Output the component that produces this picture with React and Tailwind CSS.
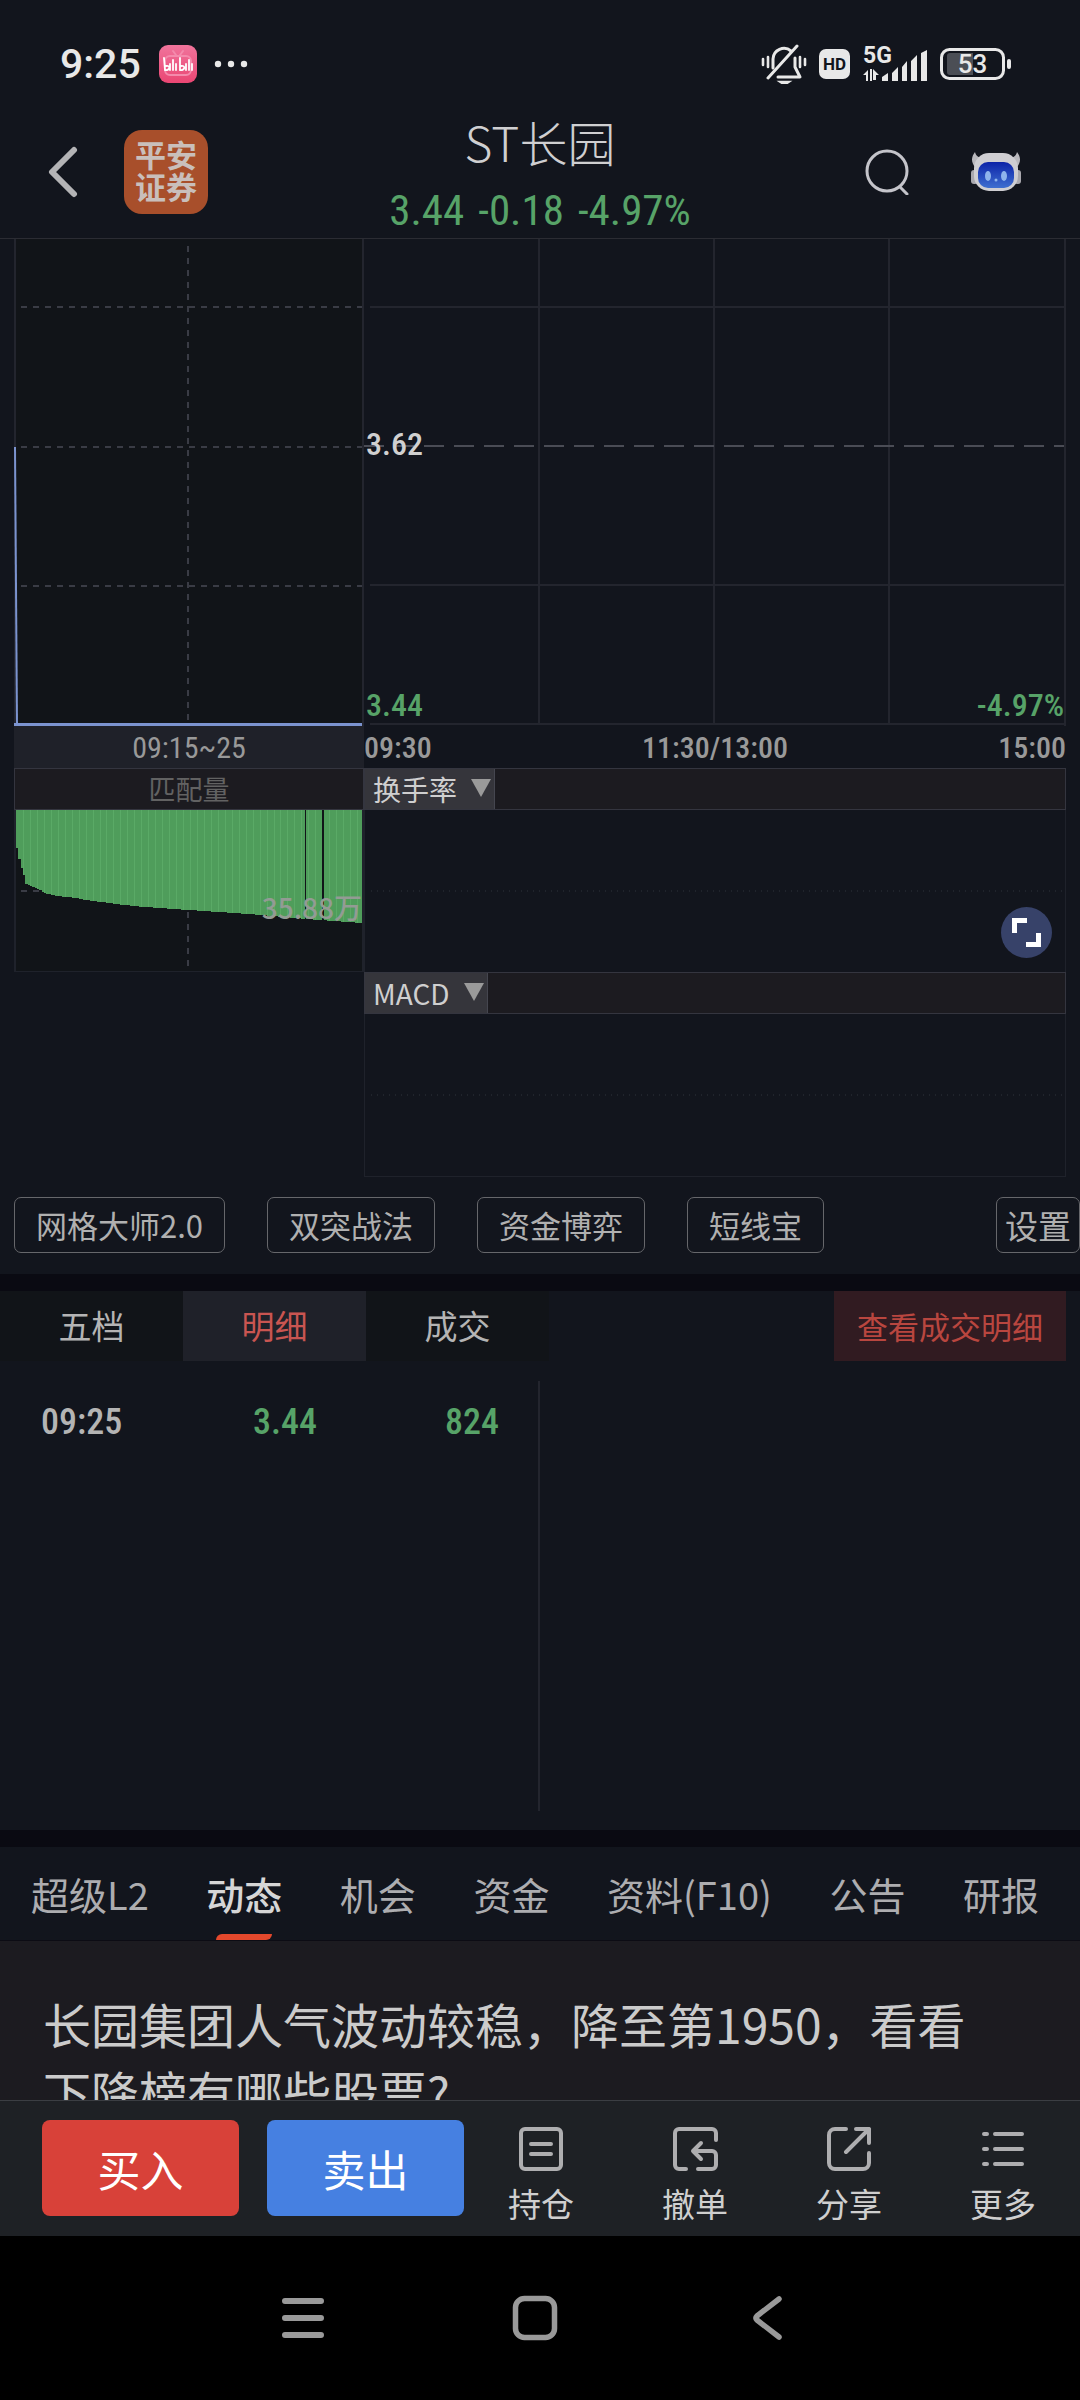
import React, { useState } from 'react';

// levels of the matched volume (px from the top edge) at given bar positions
const VOLUME_POINTS = [
    [0, 38], [1, 49], [2, 58], [3, 65], [4, 74], [8, 78], [13, 84], [18, 86],
    [26, 88], [30, 90], [50, 96], [74, 100], [100, 104], [125, 109], [149, 113],
];

const volumeAt = (i) => {
    const next = VOLUME_POINTS.findIndex(([x]) => x >= i);
    const [x2, y2] = VOLUME_POINTS[next];
    if (next === 0) return y2;
    const [x1, y1] = VOLUME_POINTS[next - 1];
    return Math.round(y1 + ((y2 - y1) * (i - x1)) / (x2 - x1));
};

const VOLUME_BARS = Array.from({ length: 150 }, (_, i) => ({ x: (i * 348) / 150, h: volumeAt(i) }));

const StatusBar = () => (
    <div className="flex h-[106px] items-start justify-between pl-[60px] pr-[68px] pt-[42px] font-[Roboto,sans-serif] text-[#e8e8e8]">
        <div className="flex h-[44px] items-center">
            <span className="text-[41px] font-medium leading-[44px]">9:25</span>
            <svg className="ml-[18px] h-[38px] w-[38px]" viewBox="0 0 38 38">
                <defs>
                    <linearGradient id="bili" x1="0" y1="0" x2="0" y2="1">
                        <stop offset="0" stopColor="#f0749c" />
                        <stop offset="1" stopColor="#ea4673" />
                    </linearGradient>
                </defs>
                <rect width="38" height="38" rx="9" fill="url(#bili)" />
                <g fill="none" stroke="#f48aac" strokeWidth="2" strokeLinecap="round">
                    <rect x="6" y="11" width="26" height="19" rx="5" />
                    <path d="M14 6l3 4M24 6l-3 4" />
                </g>
                <g fill="none" stroke="#fff" strokeWidth="1.8" strokeLinecap="round">
                    <path d="M5 13l1 12c5 1 6-5 1-4M11 19v6M14 15v10M17 19v6M21 13v12c5 1 6-5 1-4M27 19v6M30 15v10M33 19v6" />
                </g>
            </svg>
            <svg className="ml-[17px] h-[8px] w-[34px]" viewBox="0 0 34 8" fill="currentColor">
                <circle cx="4" cy="4" r="3.2" />
                <circle cx="17" cy="4" r="3.2" />
                <circle cx="30" cy="4" r="3.2" />
            </svg>
        </div>
        <div className="flex h-[44px] items-center">
            <svg className="h-[40px] w-[46px]" viewBox="0 0 46 40" fill="none" stroke="currentColor" strokeWidth="3" strokeLinecap="round">
                <path d="M12 24V15a11 11 0 0 1 18-8" />
                <path d="M36 2L7 34" />
                <path d="M34 14v9l5 10H17" strokeLinejoin="round" />
                <path d="M18 37.500h11l-3 2h-5z" fill="currentColor" strokeWidth="1.500" />
                <path d="M2 15v6M7 13v10M39 13v10M44 15v6" strokeWidth="2.600" />
            </svg>
            <span className="ml-[12px] flex h-[30px] w-[31px] items-center justify-center rounded-[7px] bg-[#e8e8e8] text-[17px] font-bold leading-none text-[#12151d]">
                HD
            </span>
            <div className="relative ml-[13px] h-[36px] w-[64px]">
                <span className="absolute left-0 top-0 text-[23px] font-bold leading-[20px]">5G</span>
                <svg className="h-[36px] w-[64px]" viewBox="0 0 64 36" fill="currentColor">
                    <path d="M0 29l5-5v11H3v-6zM7 23h2v12H7zM10 23l6 6h-3v5h-3z" />
                    <path d="M19 31l6-4v8h-6zM29 27l6-6v14h-6zM39 21l5-6v20h-5zM48 15l6-6v26h-6zM58 7l6-3v31h-6z" />
                </svg>
            </div>
            <div className="relative ml-[13px] h-[32px] w-[72px]">
                <svg className="h-[32px] w-[72px]" viewBox="0 0 72 32">
                    <rect x="1.500" y="1.500" width="62" height="29" rx="8" fill="none" stroke="currentColor" strokeWidth="3" />
                    <path d="M10 5h23v22H10a3 3 0 0 1-3-3V8a3 3 0 0 1 3-3z" fill="#4b4e55" />
                    <rect x="67" y="11" width="4" height="10" rx="2" fill="currentColor" />
                </svg>
                <span className="absolute inset-y-0 left-0 w-[65px] text-center text-[26px] font-medium leading-[32px]">53</span>
            </div>
        </div>
    </div>
);

const RobotIcon = () => (
    <svg className="h-[40px] w-[50px]" viewBox="0 0 50 40">
        <defs>
            <linearGradient id="face" x1="0" y1="0" x2="0" y2="1">
                <stop offset="0" stopColor="#0c23a8" />
                <stop offset="1" stopColor="#3f6fd0" />
            </linearGradient>
        </defs>
        <path d="M4 0c-4 5-4 10 0 15l8-9c-4 0-7-2-8-6zM46 0c4 5 4 10 0 15l-8-9c4 0 7-2 8-6z" fill="#b9b8bd" />
        <rect x="0" y="18" width="7" height="14" rx="3" fill="#a9a8ae" />
        <rect x="43" y="18" width="7" height="14" rx="3" fill="#a9a8ae" />
        <rect x="3" y="1" width="44" height="38" rx="15" fill="#cfced2" />
        <rect x="7" y="10" width="36" height="26" rx="10" fill="url(#face)" />
        <ellipse cx="17" cy="24" rx="3" ry="5" fill="#8fb4ec" />
        <ellipse cx="33" cy="24" rx="3" ry="5" fill="#8fb4ec" />
        <circle cx="25" cy="28" r="1.500" fill="#8fb4ec" />
    </svg>
);

const Header = () => (
    <header className="grid h-[132px] grid-cols-[1fr_auto_1fr] items-center">
        <div className="flex items-center pl-[48px]">
            <button aria-label="返回">
                <svg className="h-[52px] w-[30px]" viewBox="0 0 30 52" fill="none" stroke="#b4b4b6" strokeWidth="6" strokeLinecap="round" strokeLinejoin="round">
                    <path d="M26 4L4 26l22 22" />
                </svg>
            </button>
            <div className="ml-[46px] flex h-[84px] w-[84px] flex-col items-center justify-center rounded-[18px] bg-[#a84f2b] pb-[4px] text-[31px] font-bold leading-[32px] text-[#c9bfbb]">
                <span>平安</span>
                <span>证券</span>
            </div>
        </div>
        <div className="text-center">
            <h1 className="text-[48px] font-light leading-[56px] text-[#cfcfd1]">ST长园</h1>
            <p className="mt-[20px] flex justify-center gap-[14px] font-['Roboto_Condensed',Roboto,sans-serif] text-[43px] leading-[42px] text-[#57a368]">
                <span>3.44</span>
                <span>-0.18</span>
                <span>-4.97%</span>
            </p>
        </div>
        <div className="flex items-center justify-end pr-[59px]">
            <button aria-label="搜索">
                <svg className="h-[46px] w-[46px]" viewBox="0 0 46 46" fill="none" stroke="#c4c4ca" strokeWidth="3" strokeLinecap="round">
                    <circle cx="22" cy="22" r="20" />
                    <path d="M35 38l7 7" />
                </svg>
            </button>
            <button aria-label="智能助手" className="ml-[60px]">
                <RobotIcon />
            </button>
        </div>
    </header>
);

const IndicatorHeader = ({ options, label, width }) => (
    <div className="flex h-[42px] border border-[#34353f] bg-[#1c1b20]">
        <div className={`relative border-r border-[#45464f] bg-[#35353b] ${width}`}>
            <select aria-label={label} className="h-full w-full appearance-none pl-[8px] text-[28px] leading-[40px] text-[#cfcfcf] outline-none">
                {options.map((o) => (
                    <option key={o}>{o}</option>
                ))}
            </select>
            <svg className="pointer-events-none absolute right-[3px] top-[10px] h-[18px] w-[20px]" viewBox="0 0 20 18">
                <path d="M0 0h20L10 18z" fill="#9a9a9a" />
            </svg>
        </div>
    </div>
);

const EmptyPanel = ({ children }) => (
    <div className="relative h-[162px] border-x border-[#1f222b]">
        <svg className="h-full w-full" aria-hidden="true">
            <line x1="6" y1="50%" x2="100%" y2="50%" stroke="#20242c" strokeWidth="2" strokeDasharray="1 5" />
        </svg>
        {children}
    </div>
);

const AuctionChart = () => (
    <div>
        <div className="h-[487px] border-r-2 border-[#23252e] bg-[#111418]">
            <svg className="h-full w-full" aria-hidden="true">
                <line x1="1" y1="0" x2="1" y2="100%" stroke="#23252e" strokeWidth="2" />
                <g stroke="#3a3c45" strokeWidth="2" strokeDasharray="6 6">
                    <line x1="50%" y1="7" x2="50%" y2="100%" />
                    <line x1="7" y1="68" x2="100%" y2="68" />
                    <line x1="7" y1="208" x2="100%" y2="208" />
                    <line x1="7" y1="347" x2="100%" y2="347" />
                </g>
                <line x1="1" y1="208" x2="3" y2="485" stroke="#7b93cf" strokeWidth="2" />
                <line x1="0" y1="485.500" x2="100%" y2="485.500" stroke="#7b93cf" strokeWidth="3" />
            </svg>
        </div>
        <div className="h-[42px] bg-[#1f2129] text-center font-['Roboto_Condensed',Roboto,sans-serif] text-[30px] leading-[44px] text-[#999]">
            09:15~25
        </div>
        <div className="h-[42px] border border-[#34353f] bg-[#1c1b20] text-center text-[27px] leading-[40px] text-[#626262]">
            匹配量
        </div>
        <div className="relative h-[162px] border-x-2 border-b border-[#1f222b] bg-[#111418]">
            <svg className="h-full w-full" viewBox="0 0 346 161" preserveAspectRatio="none" shapeRendering="crispEdges">
                <g stroke="#3a3c45" strokeWidth="2" strokeDasharray="6 6">
                    <line x1="172" y1="6" x2="172" y2="161" />
                    <line x1="5" y1="81" x2="349" y2="81" />
                </g>
                {VOLUME_BARS.map(({ x, h }, i) => (
                    <rect key={i} x={x} y="0" width="3" height={h} fill="#4f9d5b" />
                ))}
                {/* every third bar has a lighter edge */}
                {VOLUME_BARS.filter((_, i) => i % 3 === 0 && i > 0).map(({ x, h }) => (
                    <rect key={x} x={Math.round(x)} y="0" width="1" height={h} fill="#5aaa66" />
                ))}
                <path d="M289 0h1v110h-1zM306 0h2v111h-2z" fill="#111418" />
            </svg>
            <span className="absolute right-0 top-[79px] text-[28px] font-medium leading-[36px] text-[#939b94]">35.88万</span>
        </div>
    </div>
);

const MinuteChart = () => (
    <div>
        <div className="relative h-[487px] border-r-2 border-[#23252e] font-['Roboto_Condensed',Roboto,sans-serif] text-[32px] font-medium leading-[32px]">
            <svg className="h-full w-full" aria-hidden="true">
                <g stroke="#23252e" strokeWidth="2">
                    <line x1="25%" y1="0" x2="25%" y2="486" />
                    <line x1="50%" y1="0" x2="50%" y2="486" />
                    <line x1="75%" y1="0" x2="75%" y2="486" />
                    <line x1="6" y1="68" x2="100%" y2="68" />
                    <line x1="6" y1="346" x2="100%" y2="346" />
                    <line x1="6" y1="485" x2="100%" y2="485" />
                </g>
                <line x1="0" y1="207" x2="100%" y2="207" stroke="#4a4c55" strokeWidth="2" strokeDasharray="20 10" />
            </svg>
            <span className="absolute left-[2px] top-[189px] text-[#d0d0d0]">3.62</span>
            <span className="absolute bottom-[5px] left-[2px] text-[#57a368]">3.44</span>
            <span className="absolute bottom-[5px] right-0 text-[#57a368]">-4.97%</span>
        </div>
        <div className="flex h-[42px] justify-between font-['Roboto_Condensed',Roboto,sans-serif] text-[30px] font-medium leading-[44px] text-[#999]">
            <span>09:30</span>
            <span>11:30/13:00</span>
            <span>15:00</span>
        </div>
        <IndicatorHeader label="副图指标一" options={['换手率', '成交量']} width="w-[130px]" />
        <EmptyPanel>
            <button aria-label="全屏" className="absolute bottom-[14px] right-[13px] h-[51px] w-[51px] rounded-full bg-[#374269]">
                <svg className="h-full w-full" viewBox="0 0 51 51" fill="none" stroke="#fff" strokeWidth="5">
                    <path d="M13.500 26V13.500H26M37.500 26v11.500H25" />
                </svg>
            </button>
        </EmptyPanel>
        <IndicatorHeader label="副图指标二" options={['MACD', 'KDJ']} width="w-[123px]" />
        <div className="border-b border-[#1f222b]">
            <EmptyPanel />
        </div>
    </div>
);

const Strategies = () => (
    <div className="flex pb-[21px] pl-[14px] pt-[20px] text-[31px] leading-[54px] text-[#b0b0b0]">
        <div className="flex gap-[42px]">
            {['网格大师2.0', '双突战法', '资金博弈', '短线宝'].map((name) => (
                <button key={name} className="rounded-[7px] border border-[#66676b] px-[21px]">
                    {name}
                </button>
            ))}
        </div>
        <button className="ml-auto rounded-[7px] border border-[#66676b] px-[8px] text-[33px]">设置</button>
    </div>
);

const Trades = () => {
    const [tab, setTab] = useState('明细');

    return (
        <section className="pb-[19px]">
            <div className="flex h-[70px] justify-between pr-[14px]">
                <div className="flex bg-[#111418]">
                    {['五档', '明细', '成交'].map((name) => (
                        <button
                            key={name}
                            onClick={() => setTab(name)}
                            className={`w-[183px] text-[33px] ${tab === name ? 'bg-[#1f2129] text-[#c95551]' : 'text-[#b4b4b4]'}`}
                        >
                            {name}
                        </button>
                    ))}
                </div>
                <button className="bg-[#311b21] px-[23px] text-[31px] text-[#b9463f]">查看成交明细</button>
            </div>
            <div className="mt-[20px] grid h-[430px] grid-cols-2">
                <div className="border-r-2 border-[#23252e] pl-[41px] pr-[39px] pt-[20px]">
                    <table className="w-full table-fixed font-['Roboto_Condensed',Roboto,sans-serif] text-[36px] font-medium leading-[42px] text-[#57a368]">
                        <tbody>
                            <tr>
                                <td className="text-left text-[#b4b4b4]">09:25</td>
                                <td className="pl-[30px] text-center">3.44</td>
                                <td className="text-right">824</td>
                            </tr>
                        </tbody>
                    </table>
                </div>
            </div>
        </section>
    );
};

const InfoTabs = () => {
    const [tab, setTab] = useState('动态');
    const tabs = ['超级L2', '动态', '机会', '资金', '资料(F10)', '公告', '研报'];

    return (
        <nav className="flex h-[94px] justify-between border-b border-[#0c0c14] pl-[31px] pr-[41px] text-[38px]">
            {tabs.map((name) => (
                <button
                    key={name}
                    onClick={() => setTab(name)}
                    className={`relative whitespace-nowrap ${tab === name ? 'font-medium text-[#d6d6d6]' : 'text-[#adadb0]'}`}
                >
                    {name}
                    {tab === name && (
                        <span className="absolute bottom-0 left-1/2 h-[6px] w-[56px] -translate-x-1/2 rounded-br-[6px] rounded-tl-[6px] bg-[#e3482c]" />
                    )}
                </button>
            ))}
        </nav>
    );
};

const ACTIONS = [
    {
        label: '持仓',
        icon: (
            <>
                <rect x="2" y="2" width="40" height="40" rx="4" />
                <path d="M12 17h20M12 27h20" />
            </>
        ),
    },
    {
        label: '撤单',
        icon: (
            <>
                <path d="M43 13V6a4 4 0 0 0-4-4H6a4 4 0 0 0-4 4v32a4 4 0 0 0 4 4h7" />
                <path d="M25 42h14a4 4 0 0 0 4-4V28a4 4 0 0 0-4-4H20M28 16l-8 8 8 8" />
            </>
        ),
    },
    {
        label: '分享',
        icon: (
            <>
                <path d="M19 2H8a6 6 0 0 0-6 6v28a6 6 0 0 0 6 6h28a6 6 0 0 0 6-6V26" />
                <path d="M29 2h13v14M42 2L19 25" />
            </>
        ),
    },
    {
        label: '更多',
        icon: <path d="M3 7h3M3 22h3M3 37h3M14 7h27M14 22h27M14 37h27" />,
    },
];

const ActionBar = () => (
    <div className="flex h-[136px] border-t border-[#3b3e43] bg-[#1e2125] pl-[42px] pt-[19px]">
        <div className="flex h-[96px] gap-[28px] text-[43px] text-white">
            <button className="w-[197px] rounded-[8px] bg-[#d84139]">买入</button>
            <button className="w-[197px] rounded-[8px] bg-[#4680e1]">卖出</button>
        </div>
        <div className="grid flex-1 grid-cols-4 text-[33px] leading-[40px] text-[#cfcfcf]">
            {ACTIONS.map(({ label, icon }) => (
                <button key={label} className="flex flex-col items-center pt-[7px]">
                    <svg className="h-[45px] w-[45px]" viewBox="0 0 45 45" fill="none" stroke="#aeaeb0" strokeWidth="4" strokeLinecap="round" strokeLinejoin="round">
                        {icon}
                    </svg>
                    <span className="mt-[11px]">{label}</span>
                </button>
            ))}
        </div>
    </div>
);

const SystemNav = () => (
    <div className="flex h-[164px] items-center justify-center gap-[184px] bg-black pr-[10px]">
        <button aria-label="最近任务">
            <svg className="h-[48px] w-[48px]" viewBox="0 0 48 48" stroke="#999" strokeWidth="6" strokeLinecap="round">
                <path d="M6 7h36M6 24h36M6 41h36" />
            </svg>
        </button>
        <button aria-label="主页">
            <svg className="h-[48px] w-[48px]" viewBox="0 0 48 48" fill="none" stroke="#999" strokeWidth="5.500">
                <rect x="4.500" y="4.500" width="39" height="39" rx="9" />
            </svg>
        </button>
        <button aria-label="返回上一页">
            <svg className="h-[48px] w-[48px]" viewBox="0 0 48 48" fill="none" stroke="#999" strokeWidth="5.500" strokeLinecap="round" strokeLinejoin="round">
                <path d="M36 5L14 22q-2 2 0 4l22 17" />
            </svg>
        </button>
    </div>
);

const App = () => (
    <div className="w-full overflow-hidden bg-[#12151d] font-['Noto_Sans_CJK_SC',sans-serif]">
        <StatusBar />
        <Header />
        <main className="border-t border-[#2b2c33]">
            <div className="mx-[14px] grid grid-cols-[350fr_702fr]">
                <AuctionChart />
                <MinuteChart />
            </div>
            <Strategies />
            <div className="h-[17px] bg-[#0a0a12]" />
            <Trades />
            <div className="h-[17px] bg-[#0a0a12]" />
            <InfoTabs />
            <div className="h-[159px] overflow-hidden bg-[#1c1b20] pl-[43px] pr-[100px] pt-[48px] text-[48px] leading-[68px] text-[#cbcbcb]">
                长园集团人气波动较稳，降至第1950，看看下降榜有哪些股票?
            </div>
        </main>
        <ActionBar />
        <SystemNav />
    </div>
);

export default App;
